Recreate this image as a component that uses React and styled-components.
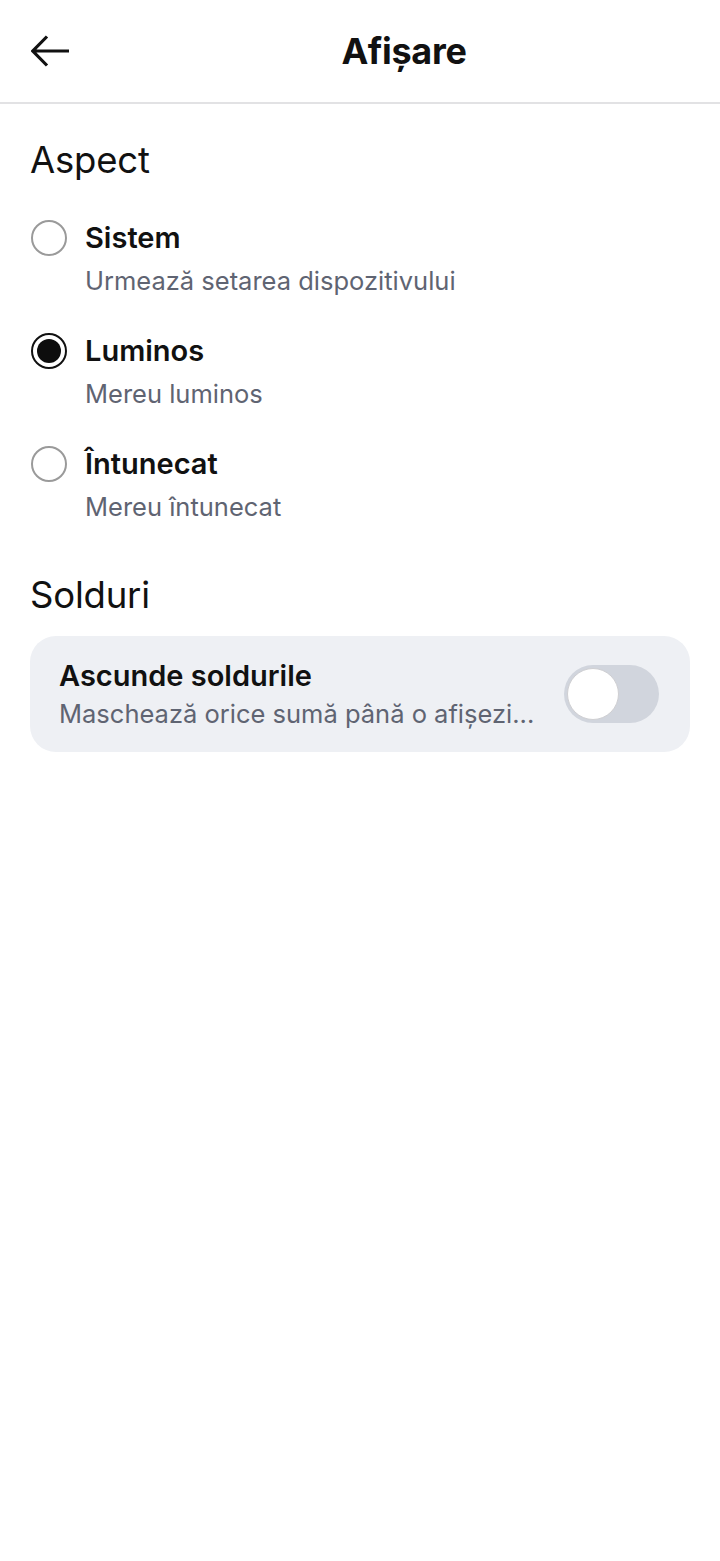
import styled, { createGlobalStyle } from "styled-components";
import { useState } from "react";

const GlobalStyle = createGlobalStyle`
  html, body {
    margin: 0;
    padding: 0;
    background: #ffffff;
  }
  body {
    font-family: "Inter", "Noto Sans", sans-serif;
    color: #111111;
  }
`;

const Page = styled.div`
  min-height: 1561px;
  background: #ffffff;
`;

const TopBar = styled.header`
  height: 102px;
  display: flex;
  align-items: center;
  border-bottom: 2px solid #e2e2e4;
`;

const BackButton = styled.button`
  width: 88px;
  height: 100%;
  padding: 0 0 0 31px;
  border: none;
  background: none;
  display: flex;
  align-items: center;
  cursor: pointer;
`;

const Title = styled.h1`
  flex: 1;
  margin: 0;
  text-align: center;
  font-weight: 700;
  font-size: 36px;
  letter-spacing: -0.3px;
  color: #111111;
`;

const Content = styled.main`
  padding: 34px 30px;
`;

const SectionTitle = styled.h2`
  margin: 0;
  font-weight: 400;
  font-size: 36.5px;
  line-height: 44px;
  letter-spacing: -0.2px;
  color: #111111;
`;

const OptionList = styled.div`
  display: flex;
  flex-direction: column;
  gap: 36px;
  margin: 38px 0 50px;
`;

const Option = styled.label`
  display: grid;
  grid-template-columns: 36px 1fr;
  column-gap: 18px;
  align-items: center;
  padding-left: 1px;
  cursor: pointer;
`;

const Radio = styled.span`
  width: 36px;
  height: 36px;
  box-sizing: border-box;
  border-radius: 50%;
  border: ${(p) => (p.$checked ? "2.5px solid #111111" : "2px solid #9a9a9a")};
  display: flex;
  align-items: center;
  justify-content: center;

  &::after {
    content: "";
    width: 24px;
    height: 24px;
    border-radius: 50%;
    background: #0d0d0d;
    display: ${(p) => (p.$checked ? "block" : "none")};
  }
`;

const OptionLabel = styled.span`
  font-weight: 600;
  font-size: 29px;
  line-height: 36px;
  color: #111111;
`;

const OptionHint = styled.span`
  grid-column: 2;
  margin-top: 9px;
  font-size: 25.5px;
  line-height: 32px;
  color: #5f6472;
`;

const Card = styled.div`
  margin-top: 19px;
  height: 116px;
  box-sizing: border-box;
  padding: 0 31px 0 29px;
  border-radius: 26px;
  background: #eef0f4;
  display: flex;
  align-items: center;
  gap: 24px;
`;

const CardText = styled.div`
  flex: 1;
  min-width: 0;
  display: flex;
  flex-direction: column;
  gap: 5px;
`;

const CardTitle = styled.span`
  font-weight: 600;
  font-size: 29px;
  line-height: 34px;
  color: #111111;
`;

const CardHint = styled.span`
  font-size: 25.5px;
  line-height: 32px;
  color: #5f6472;
  white-space: nowrap;
  overflow: hidden;
  text-overflow: ellipsis;
`;

const Toggle = styled.button`
  position: relative;
  flex: none;
  width: 95px;
  height: 58px;
  padding: 0;
  border: none;
  border-radius: 29px;
  background: ${(p) => (p.$on ? "#111111" : "#d1d5dd")};
  cursor: pointer;
`;

const Knob = styled.span`
  position: absolute;
  top: 3px;
  left: ${(p) => (p.$on ? "40px" : "3px")};
  width: 52px;
  height: 52px;
  box-sizing: border-box;
  border-radius: 50%;
  background: #ffffff;
  border: 1.5px solid #cfcfd2;
`;

const themes = [
  { id: "system", label: "Sistem", hint: "Urmează setarea dispozitivului" },
  { id: "light", label: "Luminos", hint: "Mereu luminos" },
  { id: "dark", label: "Întunecat", hint: "Mereu întunecat" },
];

const App = () => {
  const [theme, setTheme] = useState("light");
  const [hidden, setHidden] = useState(false);

  return (
    <Page>
      <GlobalStyle />
      <TopBar>
        <BackButton aria-label="Înapoi">
          <svg width="38" height="32" viewBox="0 0 38 32" fill="none">
            <path
              d="M16 1.5 1.8 16 16 30.5M2 16h36"
              stroke="#111111"
              strokeWidth="3.2"
              strokeLinecap="butt"
              strokeLinejoin="miter"
            />
          </svg>
        </BackButton>
        <Title>Afișare</Title>
      </TopBar>

      <Content>
        <SectionTitle>Aspect</SectionTitle>
        <OptionList>
          {themes.map((t) => (
            <Option key={t.id} onClick={() => setTheme(t.id)}>
              <Radio $checked={theme === t.id} />
              <OptionLabel>{t.label}</OptionLabel>
              <OptionHint>{t.hint}</OptionHint>
            </Option>
          ))}
        </OptionList>

        <SectionTitle>Solduri</SectionTitle>
        <Card>
          <CardText>
            <CardTitle>Ascunde soldurile</CardTitle>
            <CardHint>Maschează orice sumă până o afișezi...</CardHint>
          </CardText>
          <Toggle $on={hidden} onClick={() => setHidden(!hidden)}>
            <Knob $on={hidden} />
          </Toggle>
        </Card>
      </Content>
    </Page>
  );
};

export default App;
